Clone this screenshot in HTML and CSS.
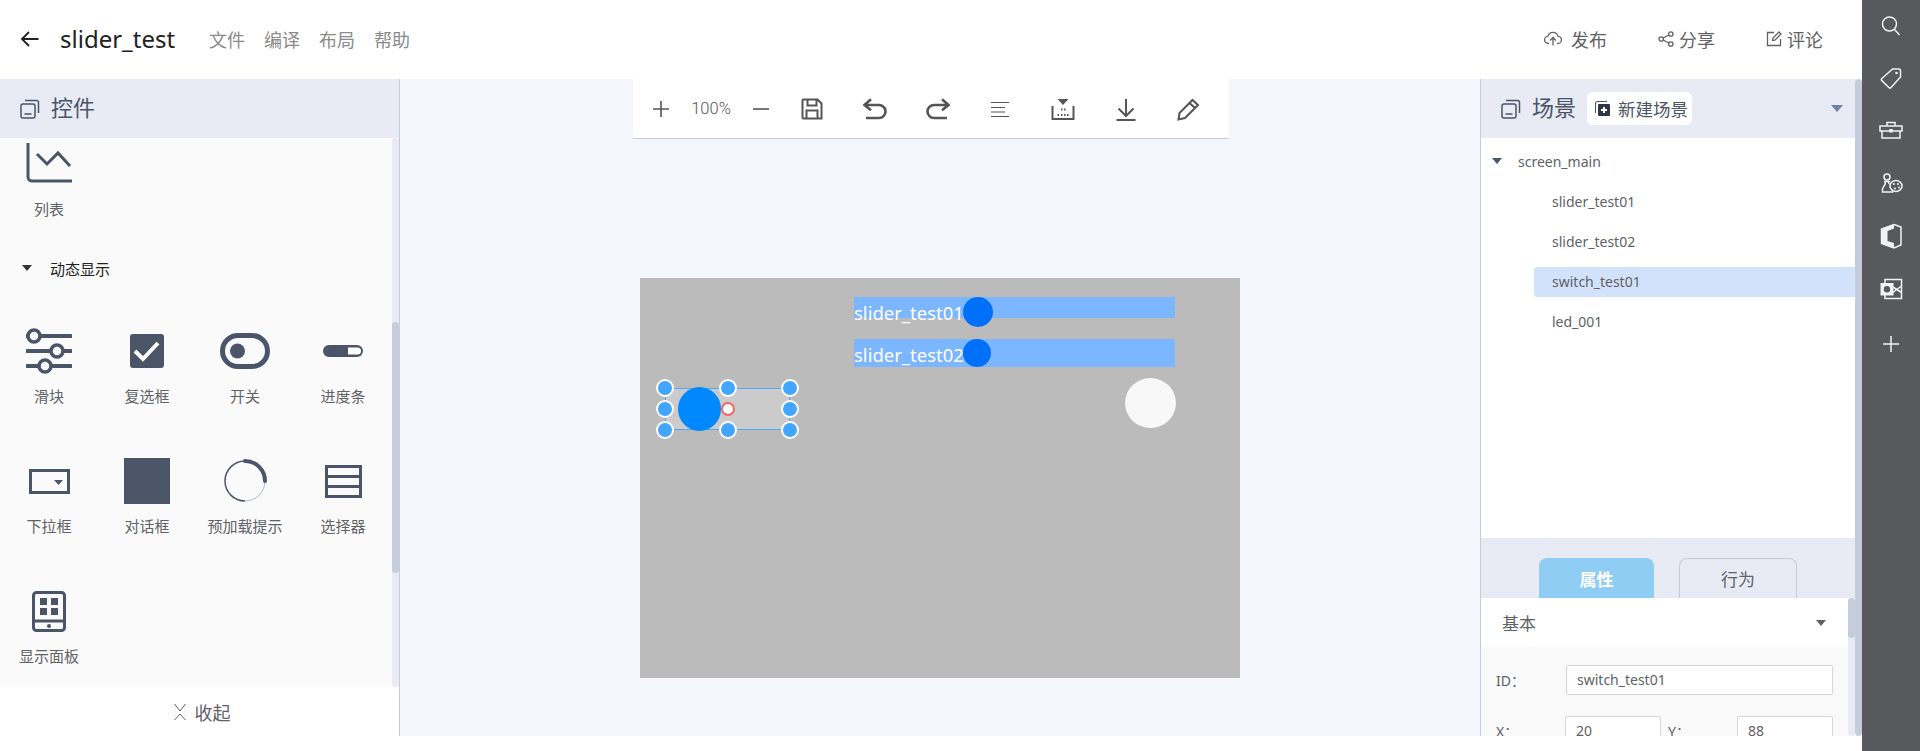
FILE: index.html
```html
<!DOCTYPE html>
<html lang="zh">
<head>
  <meta charset="UTF-8" />
  <title>slider_test</title>
  <link rel="stylesheet" href="styles.css">
</head>
<body>
<div class="app">
  <div class="main">
    <header class="topbar">
      <svg class="back" width="20" height="20" viewBox="0 0 20 20"><path d="M18.500 10H2M9 3l-7 7 7 7" /></svg>
      <span class="title">slider_test</span>
      <nav class="menu">
        <span>文件</span><span>编译</span><span>布局</span><span>帮助</span>
      </nav>
      <div class="actions">
        <span class="action act-publish">
          <svg width="18" height="16" viewBox="0 0 18 16"><path d="M5 12.500H4.500a3.700 3.700 0 0 1-.4-7.400 5 5 0 0 1 9.700 0 3.700 3.700 0 0 1-.3 7.400H13M9 14.500V7M6 9.500l3-3 3 3" /></svg>
          <span>发布</span>
        </span>
        <span class="action act-share">
          <svg width="16" height="16" viewBox="0 0 16 16"><circle cx="3.200" cy="8" r="2.200" /><circle cx="12.800" cy="3" r="2.200" /><circle cx="12.800" cy="13" r="2.200" /><path d="M5.200 7l5.700-3M5.200 9l5.700 3" /></svg>
          <span>分享</span>
        </span>
        <span class="action act-comment">
          <svg width="16" height="16" viewBox="0 0 16 16"><path d="M14.500 8v6.500h-13v-13H8M6.500 9.500l.4-2.400L13 1l2 2-6.100 6.100z" /></svg>
          <span>评论</span>
        </span>
      </div>
    </header>

    <div class="workspace">
      <aside class="left">
        <div class="panel-head left-head">
          <svg class="cards" width="20" height="20" viewBox="0 0 20 20"><rect x="1" y="5" width="14" height="14" rx="2" /><path d="M5 1.500h11.500a2 2 0 0 1 2 2V14M4.500 15h7" /></svg>
          <span>控件</span>
        </div>
        <div class="left-body">
          <div class="left-scroll">
            <div class="widget chart-widget">
              <div class="w-icon">
                <svg width="46" height="40" viewBox="0 0 46 40"><path class="dk" d="M2 0v34a4 4 0 0 0 4 4h40" /><path class="dk" d="M11 11l10 10 11-11 12 13" /></svg>
              </div>
              <span>列表</span>
            </div>
            <div class="section-title"><i class="tri"></i><span>动态显示</span></div>
            <div class="widget-grid">
              <div class="widget">
                <div class="w-icon">
                  <svg width="46" height="46" viewBox="0 0 46 46">
                    <path class="dk thick" d="M1 8h44M1 23h44M1 38h44" />
                    <circle class="knob" cx="8" cy="8" r="6" /><circle class="knob" cx="31" cy="23" r="6" /><circle class="knob" cx="19" cy="38" r="6" />
                  </svg>
                </div>
                <span>滑块</span>
              </div>
              <div class="widget">
                <div class="w-icon">
                  <svg width="34" height="34" viewBox="0 0 34 34"><rect class="fill" width="34" height="34" rx="3" /><path class="check" d="M5 17l8 8L28 9" /></svg>
                </div>
                <span>复选框</span>
              </div>
              <div class="widget">
                <div class="w-icon">
                  <svg width="50" height="36" viewBox="0 0 50 36"><rect class="dk sw" x="2.500" y="2.500" width="45" height="31" rx="15.500" /><circle class="fill" cx="17.500" cy="18" r="7.500" /></svg>
                </div>
                <span>开关</span>
              </div>
              <div class="widget">
                <div class="w-icon">
                  <svg width="40" height="12" viewBox="0 0 40 12"><rect class="fill" width="40" height="12" rx="6" /><path class="white" d="M25 2.500h9.500a3.500 3.500 0 0 1 0 7H25z" /></svg>
                </div>
                <span>进度条</span>
              </div>
              <div class="widget">
                <div class="w-icon">
                  <svg width="41" height="25" viewBox="0 0 41 25"><rect class="dk" x="1.500" y="1.500" width="38" height="22" /><path class="fill" d="M25 11h9l-4.500 5z" /></svg>
                </div>
                <span>下拉框</span>
              </div>
              <div class="widget">
                <div class="w-icon"><div class="dialog-icon"></div></div>
                <span>对话框</span>
              </div>
              <div class="widget">
                <div class="w-icon">
                  <svg width="44" height="44" viewBox="0 0 44 44">
                    <path class="thin-end" d="M42 22a20 20 0 0 1-20 20" />
                    <path class="thin" d="M22 42A20 20 0 0 1 22 2" />
                    <path class="arc" d="M22 2a20 20 0 0 1 20 20" />
                  </svg>
                </div>
                <span>预加载提示</span>
              </div>
              <div class="widget">
                <div class="w-icon">
                  <svg width="37" height="33" viewBox="0 0 37 33"><path class="dk" d="M1.500 1.500h34v30h-34zM1.500 11.500h34M1.500 21.500h34" /></svg>
                </div>
                <span>选择器</span>
              </div>
              <div class="widget">
                <div class="w-icon">
                  <svg width="34" height="41" viewBox="0 0 34 41">
                    <rect class="dk" x="1.500" y="1.500" width="31" height="38" rx="3" />
                    <path class="dk" d="M1.500 30h31" />
                    <rect class="fill" x="8" y="7" width="7" height="7" /><rect class="fill" x="19" y="7" width="7" height="7" />
                    <rect class="fill" x="8" y="17" width="7" height="7" /><rect class="fill" x="19" y="17" width="7" height="7" />
                    <circle class="fill" cx="17" cy="35" r="2" />
                  </svg>
                </div>
                <span>显示面板</span>
              </div>
            </div>
          </div>
          <div class="scrollbar left-bar"><div class="thumb"></div></div>
        </div>
        <div class="collapse">
          <svg width="14" height="18" viewBox="0 0 14 18"><path d="M1.500 1l5.500 7 5.500-7M1.500 17L7 11l5.500 6" /></svg>
          <span>收起</span>
        </div>
      </aside>

      <section class="stage">
        <div class="toolbar">
          <span class="tool tool-sm"><svg width="20" height="20" viewBox="0 0 20 20"><path d="M10 2v16M2 10h16" /></svg></span>
          <span class="zoom-val">100%</span>
          <span class="tool tool-minus"><svg width="20" height="20" viewBox="0 0 20 20"><path d="M2 10h16" /></svg></span>
          <span class="tool"><svg width="22" height="22" viewBox="0 0 22 22"><path class="mid" d="M2.500 1.500h14l4 4v15h-18a1 1 0 0 1-1-1v-17a1 1 0 0 1 1-1zM6.500 1.500v6h9v-6M5.500 20.500v-8h11v8" /></svg></span>
          <span class="tool"><svg width="24" height="24" viewBox="0 0 24 24"><path class="heavy" d="M8 2.300L1.500 8 8 13.300M2 8h14a6.500 6.500 0 0 1 0 13H3" /></svg></span>
          <span class="tool"><svg width="24" height="24" viewBox="0 0 24 24"><path class="heavy" d="M16 2.300L22.500 8 16 13.300M22 8H8a6.500 6.500 0 0 0 0 13h13" /></svg></span>
          <span class="tool"><svg class="lines" width="20" height="20" viewBox="0 0 20 20"><path d="M1 3.500h18M1 8.500h14M1 13h14M1 17.500h18" /></svg></span>
          <span class="tool"><svg width="24" height="24" viewBox="0 0 24 24"><path class="solid" d="M6.500 2h11L12 8z" /><path class="mid" d="M1.500 9v13h21V9" /><path class="dots" d="M10 12.500h1.500M13 12.500h1.500M6.500 18H8M10 18h1.500M13 18h1.500M16 18h1.500" /></svg></span>
          <span class="tool"><svg width="24" height="24" viewBox="0 0 24 24"><path class="mid" d="M12 2v17M4.500 11.500L12 19l7.500-7.500M2.500 23h19" /></svg></span>
          <span class="tool"><svg width="24" height="24" viewBox="0 0 24 24"><path class="mid" d="M2.500 22.500l1-6.500L16.500 3l5.500 5L9 21zM13.500 6l5.500 5" /></svg></span>
        </div>
        <div class="canvas">
          <div class="sl sl1"><span class="sl-label">slider_test01</span></div>
          <div class="sl-knob sk1"></div>
          <div class="sl sl2"><span class="sl-label">slider_test02</span></div>
          <div class="sl-knob sk2"></div>
          <div class="sw-box">
            <div class="sw-knob"></div>
            <i class="hd h1"></i><i class="hd h2"></i><i class="hd h3"></i>
            <i class="hd h4"></i><i class="hd h5 pivot"></i><i class="hd h6"></i>
            <i class="hd h7"></i><i class="hd h8"></i><i class="hd h9"></i>
          </div>
          <div class="led"></div>
        </div>
      </section>

      <aside class="right">
        <div class="right-inner">
          <div class="panel-head right-head">
            <svg class="cards" width="20" height="20" viewBox="0 0 20 20"><rect x="1" y="5" width="14" height="14" rx="2" /><path d="M5 1.500h11.500a2 2 0 0 1 2 2V14M4.500 15h7" /></svg>
            <span>场景</span>
            <button class="new-scene">
              <svg width="15" height="15" viewBox="0 0 15 15"><path class="ns-back" d="M.5 12V2A1.500 1.500 0 0 1 2 .5h10" /><rect class="ns-box" x="3" y="3" width="12" height="12" rx="1" /><path class="ns-plus" d="M9 6v6M6 9h6" /></svg>
              新建场景
            </button>
            <i class="head-tri"></i>
          </div>
          <div class="tree">
            <div class="tree-row root"><i class="tri"></i><span>screen_main</span></div>
            <div class="tree-row child"><span>slider_test01</span></div>
            <div class="tree-row child"><span>slider_test02</span></div>
            <div class="tree-row child active"><span>switch_test01</span></div>
            <div class="tree-row child"><span>led_001</span></div>
          </div>
          <div class="tabs">
            <span class="tab on">属性</span>
            <span class="tab">行为</span>
          </div>
          <div class="props">
            <div class="props-scroll">
              <div class="props-head"><span>基本</span><i class="tri gray"></i></div>
              <div class="props-body">
                <div class="prop-row">
                  <label class="lbl-id">ID：</label>
                  <div class="field f-id">switch_test01</div>
                </div>
                <div class="prop-row pr-xy">
                  <label class="lbl-x">X：</label>
                  <div class="field f-n">20</div>
                  <label class="lbl-y">Y：</label>
                  <div class="field f-n">88</div>
                </div>
              </div>
            </div>
            <div class="scrollbar props-bar"><div class="thumb"></div></div>
          </div>
        </div>
        <div class="scrollbar right-bar"></div>
      </aside>
    </div>
  </div>

  <div class="rail">
    <svg width="24" height="24" viewBox="0 0 24 24"><circle cx="10.500" cy="10" r="7" /><path d="M15.500 15.500L20.500 21" /></svg>
    <svg width="24" height="24" viewBox="0 0 24 24"><path d="M13.500 3H20a1.500 1.500 0 0 1 1.500 1.500V11L11.800 21.700a1.200 1.200 0 0 1-1.700 0l-7.500-7.300a1.200 1.200 0 0 1 0-1.700z" /><circle class="dot" cx="17.500" cy="7" r="1.300" /></svg>
    <svg width="24" height="24" viewBox="0 0 24 24"><path d="M1 8h22v5H1zM3 13v7h18v-7M8 8V4.500h8V8" /><rect class="dot" x="10.300" y="11" width="3.400" height="3.500" /></svg>
    <svg class="rail-chess" width="24" height="24" viewBox="0 0 24 24"><circle cx="8" cy="6" r="3" /><path d="M5 10.500h6M6.500 10.500c0 3.500-1.500 5-3 7v3.500h11M9.500 10.500c0 1 .2 1.700.5 2.500" /><ellipse cx="17" cy="15" rx="6" ry="5.500" /><circle class="dot" cx="15" cy="13" r="1" /><circle class="dot" cx="19" cy="13" r="1" /><circle class="dot" cx="20" cy="16.500" r="1" /><circle class="dot" cx="16" cy="17.500" r="1" /></svg>
    <svg width="24" height="26" viewBox="0 0 24 26"><path d="M15 1.500L22 4v18l-7 3L2.500 20.500V6z" /><path class="solid" d="M2.500 6L15 1.500v4L8.500 8v10l6.500 2v5L2.500 20.500z" /></svg>
    <svg width="24" height="24" viewBox="0 0 24 24"><path d="M6 6V2.500h16.500v19H6V18M13 9.500l9.500 6M13 16l9.500-7" /><rect class="solid" x="1.500" y="6" width="13" height="12.500" /><circle class="hole" cx="8" cy="12.200" r="3.200" /></svg>
    <svg class="rail-plus" width="24" height="24" viewBox="0 0 24 24"><path d="M12 4v16M4 12h16" /></svg>
  </div>
</div>
</body>
</html>
```

FILE: styles.css
```css
* {
  box-sizing: border-box;
}

body {
  margin: 0;
  background: #fff;
  font-family: "Noto Sans", "Noto Sans CJK SC", sans-serif;
  color: #606266;
  overflow: hidden;
}

svg {
  fill: none;
  stroke: currentColor;
  display: block;
  flex: none;
}

.app {
  display: flex;
  height: 751px;
}

.main {
  flex: 1;
  min-width: 0;
}

/* top bar */
.topbar {
  height: 79px;
  padding-bottom: 2px;
  display: flex;
  align-items: center;
  background: #fff;
}

.back {
  margin-left: 20px;
  color: #222;
  stroke-width: 1.8;
}

.title {
  margin-left: 20px;
  font-size: 24px;
  color: #222;
}

.menu {
  display: flex;
  gap: 19px;
  margin-left: 34px;
  font-size: 18px;
  color: #8a8a8a;
}

.actions {
  margin-left: auto;
  display: flex;
  margin-right: 39px;
  font-size: 18px;
}

.action {
  display: flex;
  align-items: center;
}

.action svg {
  stroke-width: 1.3;
}

.act-publish span {
  margin-left: 9px;
}

.act-share {
  margin-left: 51px;
}

.act-share span,
.act-comment span {
  margin-left: 5px;
}

.act-comment {
  margin-left: 51px;
}

.workspace {
  display: flex;
  height: 657px;
}

/* shared panel head */
.panel-head {
  height: 59px;
  display: flex;
  align-items: center;
  background: #e8ebf3;
  font-size: 22px;
  color: #4a5568;
}

.panel-head > span {
  line-height: 1;
  padding-bottom: 3px;
}

.cards {
  stroke-width: 1.5;
  color: #4a5568;
}

.tri {
  display: block;
  width: 0;
  height: 0;
  border-left: 5px solid transparent;
  border-right: 5px solid transparent;
  border-top: 6px solid #333;
}

.scrollbar {
  background: #e8ebf3;
  border-radius: 4px;
}

.thumb {
  background: #c5cddc;
  border-radius: 4px;
}

/* left panel */
.left {
  width: 400px;
  border-right: 1px solid #c5cddc;
  display: flex;
  flex-direction: column;
}

.left-head {
  padding-left: 20px;
  gap: 11px;
}

.left-body {
  height: 549px;
  background: #fafafa;
  display: flex;
  overflow: hidden;
}

.left-scroll {
  flex: 1;
}

.left-bar {
  width: 7px;
  margin-left: 0;
}

.left-bar .thumb {
  height: 251px;
  margin-top: 184px;
}

.widget {
  display: flex;
  flex-direction: column;
  align-items: center;
  font-size: 15px;
  color: #606266;
  width: 98px;
  height: 130px;
}

.w-icon {
  height: 60px;
  display: flex;
  align-items: center;
  justify-content: center;
  margin-bottom: 4px;
}

.chart-widget {
  height: 104px;
  margin-top: -16px;
}

.chart-widget .w-icon {
  height: 60px;
  margin-top: 1px;
  margin-bottom: 15px;
  align-items: flex-end;
  color: #4a5568;
}

.section-title {
  display: flex;
  align-items: center;
  height: 20px;
  padding-left: 22px;
  gap: 18px;
  margin-top: 32px;
  font-size: 15px;
  color: #222;
}

.widget-grid {
  display: grid;
  grid-template-columns: repeat(4, 98px);
  margin-top: 43px;
}

.w-icon svg {
  color: #4a5568;
}

.dk {
  stroke: #4a5568;
  stroke-width: 3;
}

.thick {
  stroke-width: 4;
  stroke-linecap: round;
}

.knob {
  fill: #fafafa;
  stroke: #4a5568;
  stroke-width: 3.500;
}

.fill {
  fill: #4a5568;
  stroke: none;
}

.white {
  fill: #fff;
  stroke: none;
}

.check {
  stroke: #fff;
  stroke-width: 4;
}

.sw {
  stroke-width: 5;
}

.thin {
  stroke: #4a5568;
  stroke-width: 1.500;
}

.thin-end {
  stroke: #b4bac4;
  stroke-width: 1;
}

.arc {
  stroke: #4a5568;
  stroke-width: 4;
  stroke-linecap: round;
}

.dialog-icon {
  width: 46px;
  height: 46px;
  background: #4a5568;
}

.collapse {
  height: 49px;
  display: flex;
  align-items: center;
  justify-content: center;
  gap: 8px;
  font-size: 18px;
  background: #fff;
  padding-left: 4px;
}

.collapse svg {
  stroke-width: 1;
}

/* canvas area */
.stage {
  flex: 1;
  min-width: 0;
  background: #f4f6fb;
}

.toolbar {
  width: 596px;
  height: 60px;
  margin-left: 233px;
  background: #fff;
  border-bottom: 1px solid #c5cddc;
  display: flex;
  align-items: center;
  color: #555;
}

.tool {
  width: 62.700px;
  display: flex;
  justify-content: center;
}

.tool svg {
  stroke-width: 1.600;
}

.tool .mid {
  stroke-width: 2;
}

.tool .heavy {
  stroke-width: 2.600;
}

.tool .lines {
  stroke-width: 1.200;
}

.tool .solid {
  fill: currentColor;
  stroke: none;
}

.tool .dots {
  stroke-width: 2;
}

.tool-sm {
  width: 56px;
}

.tool-minus {
  width: 40px;
  margin-left: 8px;
}

.zoom-val {
  width: 44px;
  text-align: center;
  font: 300 16.500px Roboto, sans-serif;
  color: #555;
}

.canvas {
  position: relative;
  width: 600px;
  height: 400px;
  margin: 139px 0 0 240px;
  background: #bbb;
}

.sl {
  position: absolute;
  left: 214px;
  width: 321px;
  background: #7cb6ff;
}

.sl1 {
  top: 19px;
  height: 21px;
}

.sl2 {
  top: 61px;
  height: 28px;
}

.sl-label {
  position: absolute;
  left: 0;
  font-size: 18.500px;
  line-height: 28px;
  color: #fff;
  white-space: nowrap;
}

.sl1 .sl-label {
  top: 2px;
}

.sl2 .sl-label {
  top: 2px;
}

.sl-knob {
  position: absolute;
  left: 323px;
  border-radius: 50%;
  background: #0070f8;
}

.sk1 {
  top: 19px;
  width: 30px;
  height: 30px;
}

.sk2 {
  top: 61px;
  width: 28px;
  height: 28px;
}

.sw-box {
  position: absolute;
  left: 25px;
  top: 110px;
  width: 125px;
  height: 42px;
  background: #cbcbcb;
  border: 1px solid #4da6ff;
}

.sw-knob {
  position: absolute;
  left: 12px;
  top: -2px;
  width: 43px;
  height: 44px;
  border-radius: 50%;
  background: #0088ff;
}

.hd {
  position: absolute;
  width: 18px;
  height: 18px;
  border-radius: 50%;
  background: #42a5ff;
  border: 2px solid #fff;
}

.h1, .h4, .h7 { left: -10px; }
.h2, .h5, .h8 { left: 53px; }
.h3, .h6, .h9 { left: 115px; }
.h1, .h2, .h3 { top: -10px; }
.h4, .h5, .h6 { top: 11px; }
.h7, .h8, .h9 { top: 32px; }

.pivot {
  width: 14px;
  height: 14px;
  left: 55px;
  top: 13px;
  background: #fff;
  border-color: #f56565;
}

.led {
  position: absolute;
  left: 485px;
  top: 100px;
  width: 51px;
  height: 50px;
  border-radius: 50%;
  background: #f8f8f8;
}

/* right panel */
.right {
  width: 382px;
  border-left: 1px solid #c5cddc;
  display: flex;
}

.right-inner {
  width: 374px;
  display: flex;
  flex-direction: column;
}

.right-bar {
  width: 7px;
  background: #c5cddc;
}

.right-head {
  padding-left: 20px;
}

.right-head > span {
  margin-left: 11px;
}

.new-scene {
  margin-left: 11px;
  width: 105px;
  height: 33px;
  border: 0;
  border-radius: 6px;
  background: #fff;
  display: flex;
  align-items: center;
  gap: 8px;
  padding: 0 0 0 8px;
  font: 17.500px "Noto Sans CJK SC", sans-serif;
  color: #4a5568;
  white-space: nowrap;
}

.ns-back {
  stroke: #4a5568;
  stroke-width: 1;
}

.ns-box {
  fill: #2d3748;
  stroke: none;
}

.ns-plus {
  stroke: #fff;
  stroke-width: 2;
}

.head-tri {
  margin-left: auto;
  margin-right: 12px;
  width: 0;
  height: 0;
  border-left: 6.500px solid transparent;
  border-right: 6.500px solid transparent;
  border-top: 7px solid #6f83a4;
}

.tree {
  height: 400px;
  background: #fff;
  padding-top: 9px;
  font-size: 14px;
}

.tree-row {
  height: 30px;
  padding-bottom: 2px;
  margin-bottom: 10px;
  display: flex;
  align-items: center;
}

.root {
  padding-left: 11px;
  gap: 16px;
}

.root .tri {
  border-top-color: #4a5568;
}

.child {
  margin-left: 53px;
  padding-left: 18px;
}

.active {
  background: #d2e2fb;
  border-radius: 3px 0 0 3px;
}

.tabs {
  height: 60px;
  background: #e8ebf3;
  padding: 20px 0 0 58px;
  display: flex;
  gap: 25px;
  font-size: 17px;
}

.tab {
  width: 118px;
  height: 40px;
  border: 1px solid #c5cad8;
  border-bottom: 0;
  border-radius: 8px 8px 0 0;
  display: flex;
  align-items: center;
  justify-content: center;
}

.tab.on {
  width: 115px;
  background: #90cdf4;
  border-color: #90cdf4;
  color: #fff;
  font-weight: 700;
}

.props {
  height: 138px;
  display: flex;
  overflow: hidden;
}

.props-scroll {
  flex: 1;
  min-width: 0;
}

.props-bar {
  width: 7px;
}

.props-bar .thumb {
  height: 40px;
}

.props-head {
  height: 49px;
  background: #fff;
  display: flex;
  align-items: center;
  justify-content: space-between;
  padding: 0 22px 0 21px;
  font-size: 17px;
}

.tri.gray {
  border-top-color: #606266;
}

.props-body {
  height: 89px;
  background: #f9f9fa;
  padding-top: 18px;
  font-size: 14px;
}

.prop-row {
  display: flex;
  align-items: center;
  padding-left: 15px;
}

.pr-xy {
  margin-top: 21px;
}

.prop-row label {
  display: block;
}

.lbl-id {
  width: 70px;
}

.lbl-x {
  width: 69px;
}

.lbl-y {
  width: 69px;
  margin-left: 7px;
}

.field {
  height: 30px;
  background: #fff;
  border: 1px solid #d4d6dc;
  border-radius: 2px;
  line-height: 28px;
  padding-left: 10px;
}

.f-id {
  width: 267px;
}

.f-n {
  width: 96px;
}

/* right icon rail */
.rail {
  width: 58px;
  background: #58595d;
  color: #f2f2f2;
  display: flex;
  flex-direction: column;
  align-items: center;
  padding-top: 14px;
  gap: 28px;
}

.rail svg {
  stroke-width: 1.500;
}

.rail .dot {
  fill: #f2f2f2;
  stroke: none;
}

.rail .solid {
  fill: #f2f2f2;
  stroke: none;
}

.rail .hole {
  fill: #58595d;
  stroke: none;
}

.rail-chess {
  margin-top: 1px;
}

.rail-plus {
  margin-top: 3px;
}
```
